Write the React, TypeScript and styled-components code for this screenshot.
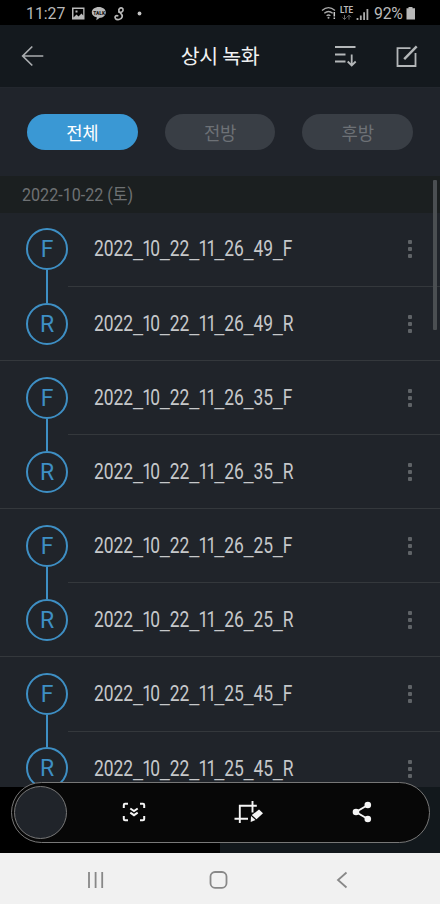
import React from 'react';
import styled, { createGlobalStyle } from 'styled-components';

const GlobalStyle = createGlobalStyle`
  * { box-sizing: border-box; }
  body { margin: 0; background: #000; }
  button { border: 0; padding: 0; background: none; font: inherit; color: inherit; }
  svg { display: block; flex: none; }
`;

const Screen = styled.div`
  position: relative;
  display: flex;
  flex-direction: column;
  width: 440px;
  height: 904px;
  overflow: hidden;
  background: #20242a;
  font-family: Roboto, 'Noto Sans CJK KR', sans-serif;
`;

const StatusBar = styled.div`
  display: flex;
  align-items: center;
  justify-content: space-between;
  flex: none;
  height: 25px;
  padding: 2px 25px 0 26px;
  background: #000;
  color: #b9b9b9;
`;

const StatusGroup = styled.div`
  display: flex;
  align-items: center;
`;

const Clock = styled.span`
  width: 46px;
  font-size: 15.8px;
  line-height: 20px;
  white-space: nowrap;
`;

const Battery = styled.span`
  width: 32px;
  font-size: 15.8px;
  line-height: 20px;
  letter-spacing: -0.2px;
  white-space: nowrap;
`;

const Header = styled.header`
  display: grid;
  grid-template-columns: 100px 1fr 100px;
  align-items: center;
  flex: none;
  height: 63px;
  padding: 0 20px;
  background: #14191e;
  border-bottom: 1px solid #23272e;
`;

const Title = styled.h1`
  margin: 0;
  padding-bottom: 2px;
  color: #f0f1f2;
  font: 400 20.5px/30px 'Noto Sans CJK KR', sans-serif;
  letter-spacing: -0.3px;
  text-align: center;
  white-space: nowrap;
`;

const HeaderActions = styled.div`
  display: flex;
  justify-content: flex-end;
  gap: 37px;
  padding-right: 1px;
`;

const Tabs = styled.nav`
  display: flex;
  gap: 27px;
  flex: none;
  height: 88px;
  padding: 26px 27px 0;
  background: #20242b;
`;

const Tab = styled.button<{ $active?: boolean }>`
  width: 111px;
  height: 36px;
  border-radius: 18px;
  background: ${p => (p.$active ? '#3a98d4' : '#393e45')};
  color: ${p => (p.$active ? '#fff' : '#6d7176')};
  font: 400 17.8px/36px 'Noto Sans CJK KR', sans-serif;
  letter-spacing: -0.3px;
`;

const DateHeading = styled.div`
  flex: none;
  height: 36.9px;
  padding-left: 22px;
  background: #1b1f20;
  color: #6e7173;
`;

const DateText = styled.span`
  display: inline-block;
  font-size: 18.5px;
  line-height: 38px;
  white-space: pre;
  transform: scaleX(0.87);
  transform-origin: left;
`;

const List = styled.main`
  flex: none;
  height: 574.1px;
  overflow: hidden;
  background: #20242a;
`;

const Group = styled.section`
  display: grid;
  grid-template-columns: 68px 1fr;
  height: 148.2px;
  border-bottom: 1px solid #34383c;
`;

const Track = styled.div`
  display: flex;
  flex-direction: column;
  align-items: center;
  padding: 15.6px 0 0 26px;
`;

const Badge = styled.div`
  display: grid;
  place-items: center;
  flex: none;
  width: 42px;
  height: 42px;
  border: 2px solid #3e8fc4;
  border-radius: 50%;
  color: #3e8fc4;
  font-size: 23px;
  line-height: 38px;
  padding-top: 1px;
`;

const Link = styled.div`
  flex: none;
  width: 2px;
  height: 32.1px;
  background: #3e8fc4;
`;

const Row = styled.div`
  display: flex;
  align-items: center;
  justify-content: space-between;
  height: 74.1px;
  padding: 0 26px;

  &:first-child { border-bottom: 1px solid #34383c; }
`;

const FileName = styled.span`
  color: #c6c8ca;
  font-size: 21.5px;
  line-height: 30px;
  white-space: nowrap;
  transform: scaleX(0.81);
  transform-origin: left;
`;

const Separator = styled.span`
  font-family: 'Liberation Sans', sans-serif;
`;

const NarrowOnes = styled.span`
  margin-left: -0.6px;
  letter-spacing: -2.3px;
`;

const MoreButton = styled.button`
  display: flex;
  flex-direction: column;
  align-items: center;
  gap: 3px;
  width: 8px;
`;

const Dot = styled.i`
  width: 4px;
  height: 4px;
  border-radius: 1px;
  background: #5f6367;
`;

const ScrollThumb = styled.div`
  position: absolute;
  top: 180px;
  left: 433px;
  width: 4px;
  height: 150px;
  border-radius: 1px;
  background: #4b4f52;
`;

const Footer = styled.div`
  flex: none;
  height: 66px;
  background: linear-gradient(90deg, #000 50%, #12181c 50%);
`;

const CaptureBar = styled.div`
  position: absolute;
  top: 782px;
  left: 11px;
  display: flex;
  align-items: center;
  width: 419px;
  height: 61px;
  padding-left: 2px;
  padding-bottom: 1px;
  border: 1px solid #777;
  border-radius: 31px;
  background: #070707;
`;

const Preview = styled.div`
  flex: none;
  width: 53px;
  height: 53px;
  border: 1px solid #777;
  border-radius: 50%;
  background: #20242a;
`;

const CaptureActions = styled.div`
  display: grid;
  grid-template-columns: repeat(3, 114px);
  justify-items: center;
  align-items: center;
  padding-left: 10px;
`;

const NavBar = styled.nav`
  display: flex;
  justify-content: space-between;
  flex: none;
  height: 51px;
  padding: 17px 91px 0 86px;
  background: #f1f1f1;
`;

const files = ['2022_10_22_11_26_49', '2022_10_22_11_26_35', '2022_10_22_11_26_25', '2022_10_22_11_25_45'];

function FileRow({ name }: { name: string }) {
  return (
    <Row>
      <FileName>
        {name.split(/(_|1+)/).map((part, i) => {
          if (part === '_') return <Separator key={i}>_</Separator>;
          if (part.startsWith('1')) return <NarrowOnes key={i}>{part}</NarrowOnes>;
          return part;
        })}
      </FileName>
      <MoreButton aria-label="더보기"><Dot /><Dot /><Dot /></MoreButton>
    </Row>
  );
}

const NotificationIcons = () => (
  <svg width="74" height="18" viewBox="0 0 74 18" fill="none">
    <path fill="#b9b9b9" fillRule="evenodd" d="M0 2.500h12.500v12H0ZM1.500 4v8.500L4.500 9.500l2 2 3-3 1.700 2V4ZM3.500 5.500h2v2h-2Z" />
    <path fill="#b9b9b9" d="M26.800 2c4 0 7 2.400 7 5.400s-3 5.400-6 5.400l-3.500 2.500.5-3c-3-.7-5-2.500-5-4.900 0-3 3-5.400 7-5.400Z" />
    <text x="21.300" y="9.500" fill="#171717" fontFamily="Roboto" fontSize="4.800" fontWeight="900">TALK</text>
    <path d="M51 4c-.8-1.800-3.500-1.500-4.200.7-.8 2.800 4.200 3.500 3.400 7-.8 3.200-5.400 3.600-6.800 1.700-1.200-1.800.8-3.500 2.300-2.600M46.800 7c2.300 1.200 4.800-.5 4.200-3" stroke="#b9b9b9" strokeWidth="1.700" strokeLinecap="round" />
    <circle cx="67.500" cy="8.500" r="1.900" fill="#c4c4c4" />
  </svg>
);

const SignalIcons = () => (
  <svg width="53" height="18" viewBox="0 0 53 18" fill="none" stroke="#aaa" strokeWidth="1.3">
    <path d="M1 5.500c4-3.500 9-3.500 13 0M3.300 8.200c2.800-2.300 5.600-2.300 8.400 0M5.600 10.700c1.400-1 2.500-1 3.800 0" />
    <circle cx="7.500" cy="12.800" r="1" fill="#aaa" stroke="none" />
    <path d="M13.300 7v4.500M13.300 12.500v1.500" stroke="#ccc" strokeWidth="1.500" />
    <text x="19" y="8" fill="#b9b9b9" stroke="none" fontFamily="Roboto" fontWeight="700" fontSize="8.500" textLength="13" lengthAdjust="spacingAndGlyphs">LTE</text>
    <path d="M23.500 10v4.500m-2-2 2 2 2-2M28 14.700v-4.500m-2 2 2-2 2 2" stroke="#666" strokeWidth="1" />
    <path d="M36.500 13v2M39.800 10.500v4.500M43.100 7.300v7.700M46.400 4v11" strokeWidth="1.800" />
  </svg>
);

export default function App() {
  return (
    <Screen>
      <GlobalStyle />
      <StatusBar>
        <StatusGroup>
          <Clock>11:27</Clock>
          <NotificationIcons />
        </StatusGroup>
        <StatusGroup>
          <SignalIcons />
          <Battery>92%</Battery>
          <svg width="9" height="14" viewBox="0 0 9 14"><path fill="#b9b9b9" d="M2.500 0h4v1.200H9V12.500H.5V1.200h2Z" /></svg>
        </StatusGroup>
      </StatusBar>
      <Header>
        <svg width="26" height="24" viewBox="0 0 26 24" fill="none" stroke="#a9acaf" strokeWidth="1.7">
          <path d="M12.300 2.500 2.700 12l9.600 9.500M3 12h20.300" />
        </svg>
        <Title>상시 녹화</Title>
        <HeaderActions>
          <svg width="24" height="24" viewBox="0 0 24 24" fill="none" stroke="#b4b7b9" strokeWidth="1.8">
            <path d="M1 3h20.500M1 10.500h10.500M1 17.500h10.500M17.700 10.500v11M13.700 17.500l4 4 4-4" />
          </svg>
          <svg width="24" height="24" viewBox="0 0 24 24" fill="none" stroke="#b4b7b9" strokeWidth="1.8">
            <path d="M15.500 4.200H2.500v17.800h18V9" />
            <path d="M9.200 15.200 21.700 2.300" strokeWidth="2.400" />
          </svg>
        </HeaderActions>
      </Header>
      <Tabs>
        <Tab $active>전체</Tab>
        <Tab>전방</Tab>
        <Tab>후방</Tab>
      </Tabs>
      <DateHeading><DateText>2022-10-22 (토)</DateText></DateHeading>
      <List>
        {files.map(file => (
          <Group key={file}>
            <Track>
              <Badge>F</Badge>
              <Link />
              <Badge>R</Badge>
            </Track>
            <div>
              <FileRow name={`${file}_F`} />
              <FileRow name={`${file}_R`} />
            </div>
          </Group>
        ))}
      </List>
      <Footer />
      <NavBar>
        <svg width="20" height="20" viewBox="0 0 20 20" stroke="#888" strokeWidth="1.8">
          <path d="M3 2v16M9.600 2v16M16.200 2v16" />
        </svg>
        <svg width="20" height="20" viewBox="0 0 20 20" fill="none" stroke="#888" strokeWidth="1.8">
          <rect x="2.500" y="2" width="16" height="15.800" rx="4.500" />
        </svg>
        <svg width="20" height="20" viewBox="0 0 20 20" fill="none" stroke="#888" strokeWidth="1.8">
          <path d="m17.500 2.500-8.500 7.500 8.500 7.500" />
        </svg>
      </NavBar>
      <ScrollThumb />
      <CaptureBar>
        <Preview />
        <CaptureActions>
          <svg width="24" height="20" viewBox="0 0 24 20" fill="none" stroke="#f5f5f5" strokeWidth="2">
            <path d="M6 1.800H3a1.200 1.200 0 0 0-1.200 1.200v3M18 1.800h3A1.200 1.200 0 0 1 22.200 3v3M1.800 14v3A1.200 1.200 0 0 0 3 18.200h3M22.200 14v3a1.200 1.200 0 0 1-1.200 1.200h-3" />
            <path d="m8.300 6.500 3.700 2.500 3.700-2.500M8.300 10.700l3.700 2.500 3.700-2.500" />
          </svg>
          <svg width="30" height="24" viewBox="0 0 30 24" fill="none" stroke="#f5f5f5" strokeWidth="1.900">
            <path d="M6.800 23V5.800h17M1.500 18.800h13.500M19.500 1v11.500" />
            <path fill="#f5f5f5" stroke="none" d="m26 9.500 4 3.800-6.500 6-4.700-4.200ZM18 16l4.500 4-4.800 2.100Z" />
          </svg>
          <svg width="20" height="22" viewBox="0 0 20 22" fill="#f5f5f5" stroke="#f5f5f5">
            <path d="M15.800 4 4 11l11.800 7" fill="none" strokeWidth="1.900" />
            <circle cx="4" cy="11" r="3.300" stroke="none" />
            <circle cx="15.800" cy="4" r="3.300" stroke="none" />
            <circle cx="15.800" cy="18" r="3.300" stroke="none" />
          </svg>
        </CaptureActions>
      </CaptureBar>
    </Screen>
  );
}
